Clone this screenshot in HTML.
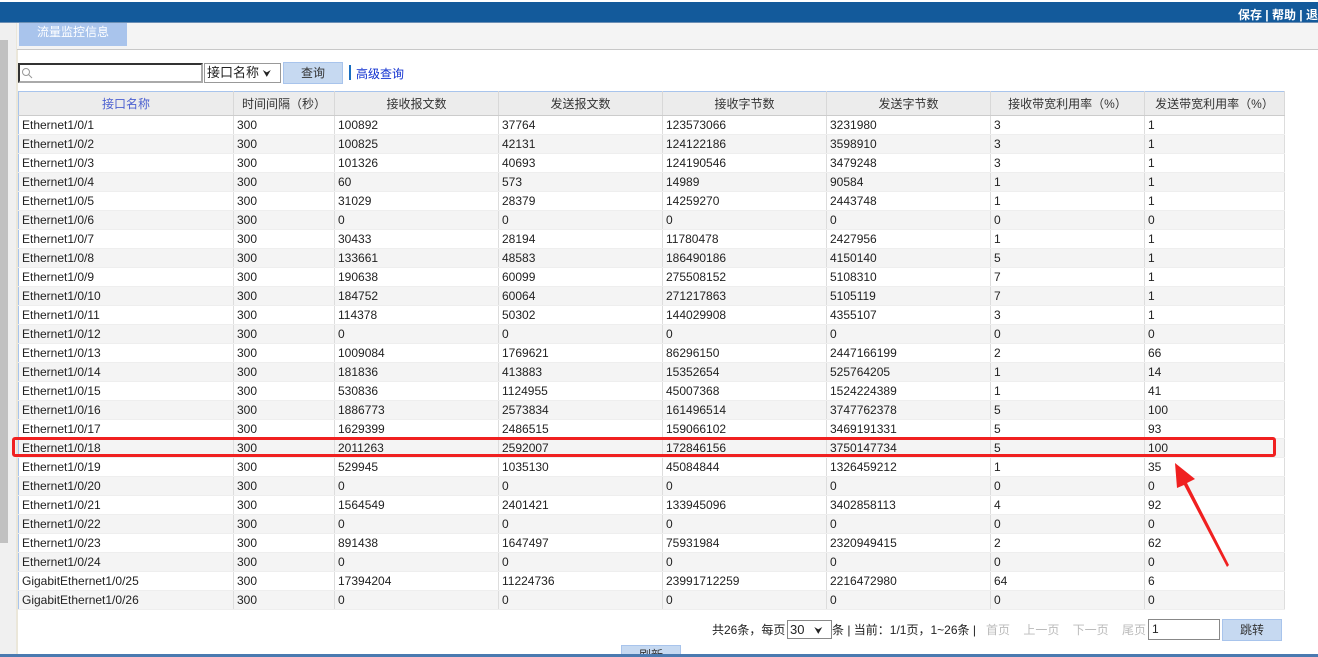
<!DOCTYPE html>
<html><head><meta charset="utf-8"><style>
*{margin:0;padding:0;box-sizing:border-box}
body{width:1318px;height:657px;overflow:hidden;background:#fff;font-family:"Liberation Sans","Noto Sans CJK SC",sans-serif;font-size:12px;color:#222;position:relative}
.abs{position:absolute}
#top{left:0;top:0;width:1318px;height:23px;background:#135a9b;border-top:2px solid #fff;border-bottom:1px solid #6c8fb5}
#top span{position:absolute;right:0;top:4px;color:#fff;font-weight:bold;font-size:12px}
#bar{left:17px;top:23px;width:1301px;height:27px;background:#f4f4f4;border-bottom:1px solid #c8c8c8}
#tab{left:19px;top:23px;width:108px;height:23px;background:#a9c4ec;color:#fff;font-size:12px;text-align:center;line-height:19px}
#sb{left:0;top:23px;width:16px;height:634px;background:#f0f0f0}
#thumb{left:0;top:40px;width:8px;height:503px;background:#c1c1c1}
#sl{left:16px;top:23px;width:2px;height:634px;background:#ebe7da}
table{position:absolute;left:18px;top:91px;border-collapse:collapse;width:1266px;table-layout:fixed;border:1px solid #a8c4ec}
th{height:24px;background:#ececec;font-weight:normal;color:#333;border-right:1px solid #d8d8d8;border-bottom:1px solid #ccc;font-size:12px}
td{height:19px;padding-left:3px;border-right:1px solid #ddd;border-bottom:1px solid #eee;font-size:12px;white-space:nowrap;color:#222}
tr:nth-child(odd) td{background:#f4f4f4}
</style></head><body>
<div id="top" class="abs"><span>保存 | 帮助 | 退</span></div>
<div id="sb" class="abs"></div><div id="thumb" class="abs"></div><div id="sl" class="abs"></div>
<div id="bar" class="abs"></div>
<div id="tab" class="abs">流量监控信息</div>
<div class="abs" style="left:18px;top:63px;width:185px;height:20px;border:2px solid #333;border-right-color:#aaa;border-bottom-color:#aaa;background:#fff"><svg width="12" height="12" style="position:absolute;left:1px;top:2px"><circle cx="5" cy="5" r="3.5" fill="none" stroke="#999"/><line x1="7.5" y1="7.5" x2="11" y2="11" stroke="#999"/></svg></div>
<div class="abs" style="left:204px;top:63px;width:77px;height:20px;border:1px solid #999;background:#fff;font-size:13px;line-height:18px;padding-left:2px">接口名称 <span style="font-size:10px">&#x2B9F;</span></div>
<div class="abs" style="left:283px;top:62px;width:60px;height:22px;background:#c6d9f1;border:1px solid #a8c4ec;text-align:center;line-height:20px;color:#333">查询</div>
<div class="abs" style="left:349px;top:65px;width:2px;height:15px;background:#1a6fc0"></div>
<div class="abs" style="left:356px;top:65px;color:#1030d0">高级查询</div>
<table>
<colgroup><col style="width:215px"><col style="width:101px"><col style="width:164px"><col style="width:164px"><col style="width:164px"><col style="width:164px"><col style="width:154px"><col style="width:140px"></colgroup>
<tr><th style="color:#4a5fd0">接口名称</th><th>时间间隔（秒）</th><th>接收报文数</th><th>发送报文数</th><th>接收字节数</th><th>发送字节数</th><th>接收带宽利用率（%）</th><th>发送带宽利用率（%）</th></tr>
<tr><td>Ethernet1/0/1</td><td>300</td><td>100892</td><td>37764</td><td>123573066</td><td>3231980</td><td>3</td><td>1</td></tr>
<tr><td>Ethernet1/0/2</td><td>300</td><td>100825</td><td>42131</td><td>124122186</td><td>3598910</td><td>3</td><td>1</td></tr>
<tr><td>Ethernet1/0/3</td><td>300</td><td>101326</td><td>40693</td><td>124190546</td><td>3479248</td><td>3</td><td>1</td></tr>
<tr><td>Ethernet1/0/4</td><td>300</td><td>60</td><td>573</td><td>14989</td><td>90584</td><td>1</td><td>1</td></tr>
<tr><td>Ethernet1/0/5</td><td>300</td><td>31029</td><td>28379</td><td>14259270</td><td>2443748</td><td>1</td><td>1</td></tr>
<tr><td>Ethernet1/0/6</td><td>300</td><td>0</td><td>0</td><td>0</td><td>0</td><td>0</td><td>0</td></tr>
<tr><td>Ethernet1/0/7</td><td>300</td><td>30433</td><td>28194</td><td>11780478</td><td>2427956</td><td>1</td><td>1</td></tr>
<tr><td>Ethernet1/0/8</td><td>300</td><td>133661</td><td>48583</td><td>186490186</td><td>4150140</td><td>5</td><td>1</td></tr>
<tr><td>Ethernet1/0/9</td><td>300</td><td>190638</td><td>60099</td><td>275508152</td><td>5108310</td><td>7</td><td>1</td></tr>
<tr><td>Ethernet1/0/10</td><td>300</td><td>184752</td><td>60064</td><td>271217863</td><td>5105119</td><td>7</td><td>1</td></tr>
<tr><td>Ethernet1/0/11</td><td>300</td><td>114378</td><td>50302</td><td>144029908</td><td>4355107</td><td>3</td><td>1</td></tr>
<tr><td>Ethernet1/0/12</td><td>300</td><td>0</td><td>0</td><td>0</td><td>0</td><td>0</td><td>0</td></tr>
<tr><td>Ethernet1/0/13</td><td>300</td><td>1009084</td><td>1769621</td><td>86296150</td><td>2447166199</td><td>2</td><td>66</td></tr>
<tr><td>Ethernet1/0/14</td><td>300</td><td>181836</td><td>413883</td><td>15352654</td><td>525764205</td><td>1</td><td>14</td></tr>
<tr><td>Ethernet1/0/15</td><td>300</td><td>530836</td><td>1124955</td><td>45007368</td><td>1524224389</td><td>1</td><td>41</td></tr>
<tr><td>Ethernet1/0/16</td><td>300</td><td>1886773</td><td>2573834</td><td>161496514</td><td>3747762378</td><td>5</td><td>100</td></tr>
<tr><td>Ethernet1/0/17</td><td>300</td><td>1629399</td><td>2486515</td><td>159066102</td><td>3469191331</td><td>5</td><td>93</td></tr>
<tr><td>Ethernet1/0/18</td><td>300</td><td>2011263</td><td>2592007</td><td>172846156</td><td>3750147734</td><td>5</td><td>100</td></tr>
<tr><td>Ethernet1/0/19</td><td>300</td><td>529945</td><td>1035130</td><td>45084844</td><td>1326459212</td><td>1</td><td>35</td></tr>
<tr><td>Ethernet1/0/20</td><td>300</td><td>0</td><td>0</td><td>0</td><td>0</td><td>0</td><td>0</td></tr>
<tr><td>Ethernet1/0/21</td><td>300</td><td>1564549</td><td>2401421</td><td>133945096</td><td>3402858113</td><td>4</td><td>92</td></tr>
<tr><td>Ethernet1/0/22</td><td>300</td><td>0</td><td>0</td><td>0</td><td>0</td><td>0</td><td>0</td></tr>
<tr><td>Ethernet1/0/23</td><td>300</td><td>891438</td><td>1647497</td><td>75931984</td><td>2320949415</td><td>2</td><td>62</td></tr>
<tr><td>Ethernet1/0/24</td><td>300</td><td>0</td><td>0</td><td>0</td><td>0</td><td>0</td><td>0</td></tr>
<tr><td>GigabitEthernet1/0/25</td><td>300</td><td>17394204</td><td>11224736</td><td>23991712259</td><td>2216472980</td><td>64</td><td>6</td></tr>
<tr><td>GigabitEthernet1/0/26</td><td>300</td><td>0</td><td>0</td><td>0</td><td>0</td><td>0</td><td>0</td></tr>
</table>
<div class="abs" style="left:12px;top:437px;width:1264px;height:20px;border:3px solid #f02020;border-radius:3px"></div>
<svg class="abs" style="left:1165px;top:455px" width="80" height="120"><polygon points="64,110 22,28 30,24 10,8 12,33 19,30 62,112" fill="#f02020"/></svg>
<div class="abs" style="left:712px;top:622px;font-size:12px;line-height:16px;color:#222">共26条，每页</div>
<div class="abs" style="left:787px;top:620px;width:45px;height:19px;border:1px solid #888;background:#fff;font-size:13px;line-height:17px;padding-left:2px">30 <span style="font-size:10px;margin-left:6px">&#x2B9F;</span></div>
<div class="abs" style="left:832px;top:622px;line-height:16px">条 | 当前：1/1页，1~26条 |</div>
<div class="abs" style="left:986px;top:622px;line-height:16px;color:#bbb">首页 &nbsp;&nbsp; 上一页 &nbsp;&nbsp; 下一页 &nbsp;&nbsp; 尾页</div>
<div class="abs" style="left:1148px;top:619px;width:72px;height:21px;border:1px solid #888;background:#fff;padding-left:3px;line-height:19px">1</div>
<div class="abs" style="left:1222px;top:619px;width:60px;height:22px;background:#c6d9f1;border:1px solid #a8c4ec;text-align:center;line-height:20px;color:#333">跳转</div>
<div class="abs" style="left:621px;top:645px;width:60px;height:12px;background:#c6d9f1;border:1px solid #a8c4ec;text-align:center;line-height:18px;color:#333;overflow:hidden">刷新</div>
<div class="abs" style="left:0;top:654px;width:1318px;height:3px;background:#4a7ab0"></div>
</body></html>
